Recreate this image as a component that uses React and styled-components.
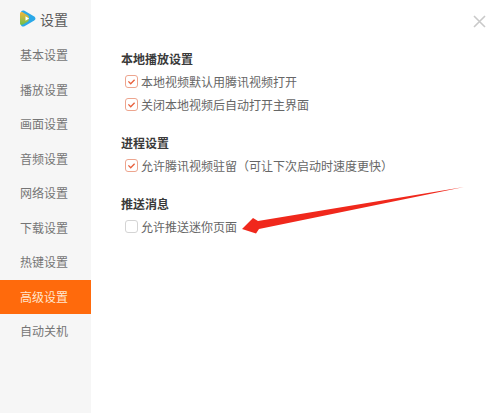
import React from 'react';
import styled, { createGlobalStyle } from 'styled-components';

const GlobalStyle = createGlobalStyle`
  html, body {
    margin: 0;
    padding: 0;
    background: #fff;
  }
  body {
    font-family: "Noto Sans CJK SC", "Liberation Sans", sans-serif;
  }
`;

const Window = styled.div`
  position: relative;
  display: flex;
  width: 500px;
  height: 413px;
  overflow: hidden;
  background: #fff;
`;

const Sidebar = styled.div`
  width: 91px;
  flex-shrink: 0;
  background: #f6f6f6;
  padding-top: 38px;
  box-sizing: border-box;
  position: relative;
`;

const Brand = styled.div`
  position: absolute;
  top: 9px;
  left: 18px;
  display: flex;
  align-items: center;
  gap: 3px;
  font-size: 14px;
  line-height: 18px;
  color: #5a5a5a;
`;

const NavItem = styled.div`
  height: 34.5px;
  line-height: 34.5px;
  padding-left: 20px;
  font-size: 12px;
  color: ${p => (p.$active ? '#ffe6cf' : '#757575')};
  background: ${p => (p.$active ? '#ff6a0c' : 'transparent')};
`;

const Content = styled.div`
  flex: 1;
  padding: 51px 0 0 30px;
`;

const Section = styled.div`
  margin-bottom: 19px;
`;

const Heading = styled.div`
  font-size: 12px;
  line-height: 16px;
  font-weight: 700;
  color: #3a3a3a;
  margin-bottom: 3px;
`;

const Row = styled.div`
  display: flex;
  align-items: center;
  gap: 3px;
  height: 23px;
  font-size: 12px;
  color: #666;
`;

const Box = styled.span`
  width: 11px;
  height: 11px;
  border-radius: 3px;
  border: 1px solid ${p => (p.$checked ? '#eda58e' : '#d4d4d4')};
  background: #fff;
  margin-left: 4px;
  display: flex;
  align-items: center;
  justify-content: center;
`;

const Close = styled.svg`
  position: absolute;
  top: 15px;
  left: 473px;
`;

const Arrow = styled.svg`
  position: absolute;
  top: 180px;
  left: 235px;
`;

const navItems = ['基本设置', '播放设置', '画面设置', '音频设置', '网络设置', '下载设置', '热键设置', '高级设置', '自动关机'];

const sections = [
  {
    title: '本地播放设置',
    rows: [
      { label: '本地视频默认用腾讯视频打开', checked: true },
      { label: '关闭本地视频后自动打开主界面', checked: true },
    ],
  },
  {
    title: '进程设置',
    rows: [{ label: '允许腾讯视频驻留（可让下次启动时速度更快）', checked: true }],
  },
  {
    title: '推送消息',
    rows: [{ label: '允许推送迷你页面', checked: false }],
  },
];

const Logo = () => (
  <svg width="19" height="19" viewBox="0 0 19 19">
    <defs>
      <linearGradient id="logoGrad" x1="0" y1="0" x2="0" y2="1">
        <stop offset="0" stopColor="#f4b63c" />
        <stop offset="1" stopColor="#6fbf4a" />
      </linearGradient>
    </defs>
    <path d="M3 3.5C3 1.5 4.8.9 6.5 1.8l9.7 5.6c1.7 1 1.7 3.2 0 4.2l-9.7 5.6C4.8 18.1 3 17.5 3 15.5z" fill="#2aa8e8" />
    <path d="M2 4.5C2 3 3.6 2.6 5 3.4l5 3.2c1.4.9 1.4 4.9 0 5.8l-5 3.2C3.6 16.4 2 16 2 14.5z" fill="url(#logoGrad)" />
    <path d="M7.5 7.2l3.6 2.3-3.6 2.3z" fill="#fff" />
  </svg>
);

const Check = () => (
  <svg width="9" height="9" viewBox="0 0 9 9">
    <path d="M1.4 4.4l2.3 2.3 3.9-4" fill="none" stroke="#e8603c" strokeWidth="1.3" />
  </svg>
);

const App = () => {
  return (
    <Window>
      <GlobalStyle />
      <Sidebar>
        <Brand>
          <Logo />
          设置
        </Brand>
        {navItems.map((item, index) => (
          <NavItem key={item} $active={index === 7}>{item}</NavItem>
        ))}
      </Sidebar>
      <Content>
        {sections.map(section => (
          <Section key={section.title}>
            <Heading>{section.title}</Heading>
            {section.rows.map(row => (
              <Row key={row.label}>
                <Box $checked={row.checked}>{row.checked && <Check />}</Box>
                {row.label}
              </Row>
            ))}
          </Section>
        ))}
      </Content>
      <Close width="13" height="13" viewBox="0 0 13 13">
        <path d="M1 1l11 11M12 1L1 12" stroke="#c9c9c9" strokeWidth="1.6" />
      </Close>
      <Arrow width="235" height="60" viewBox="0 0 235 60">
        <path d="M229 7L23 41 18 38 7 49 21 53.5 24 49z" fill="#f0281c" />
      </Arrow>
    </Window>
  );
};

export default App;
